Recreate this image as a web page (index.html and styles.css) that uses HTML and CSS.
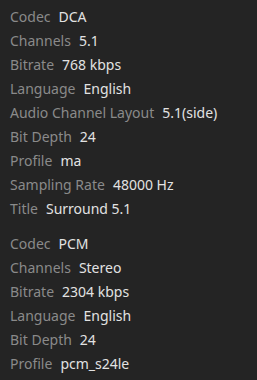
FILE: index.html
```html
<!DOCTYPE html>
<html lang="en">
<head>
  <meta charset="UTF-8">
  <title>Media Info</title>
  <link rel="stylesheet" href="styles.css">
</head>
<body>

<div class="stream">
  <div class="row"><span class="label">Codec</span><span class="value">DCA</span></div>
  <div class="row"><span class="label">Channels</span><span class="value">5.1</span></div>
  <div class="row"><span class="label">Bitrate</span><span class="value">768 kbps</span></div>
  <div class="row"><span class="label">Language</span><span class="value">English</span></div>
  <div class="row"><span class="label">Audio Channel Layout</span><span class="value">5.1(side)</span></div>
  <div class="row"><span class="label">Bit Depth</span><span class="value">24</span></div>
  <div class="row"><span class="label">Profile</span><span class="value">ma</span></div>
  <div class="row"><span class="label">Sampling Rate</span><span class="value">48000 Hz</span></div>
  <div class="row"><span class="label">Title</span><span class="value">Surround 5.1</span></div>
</div>

<div class="stream">
  <div class="row"><span class="label">Codec</span><span class="value">PCM</span></div>
  <div class="row"><span class="label">Channels</span><span class="value">Stereo</span></div>
  <div class="row"><span class="label">Bitrate</span><span class="value">2304 kbps</span></div>
  <div class="row"><span class="label">Language</span><span class="value">English</span></div>
  <div class="row"><span class="label">Bit Depth</span><span class="value">24</span></div>
  <div class="row"><span class="label">Profile</span><span class="value">pcm_s24le</span></div>
</div>

</body>
</html>
```

FILE: styles.css
```css
body {
  margin: 0;
  background: #242424;
  font-family: 'Noto Sans', sans-serif;
  font-size: 14px;
  padding: 5px 10px;
}

.stream {
  margin-bottom: 11px;
}

.row {
  line-height: 24px;
  white-space: nowrap;
}

.label {
  color: #8a8a8a;
  margin-right: 8px;
}

.value {
  color: #e2e2e2;
}
```
